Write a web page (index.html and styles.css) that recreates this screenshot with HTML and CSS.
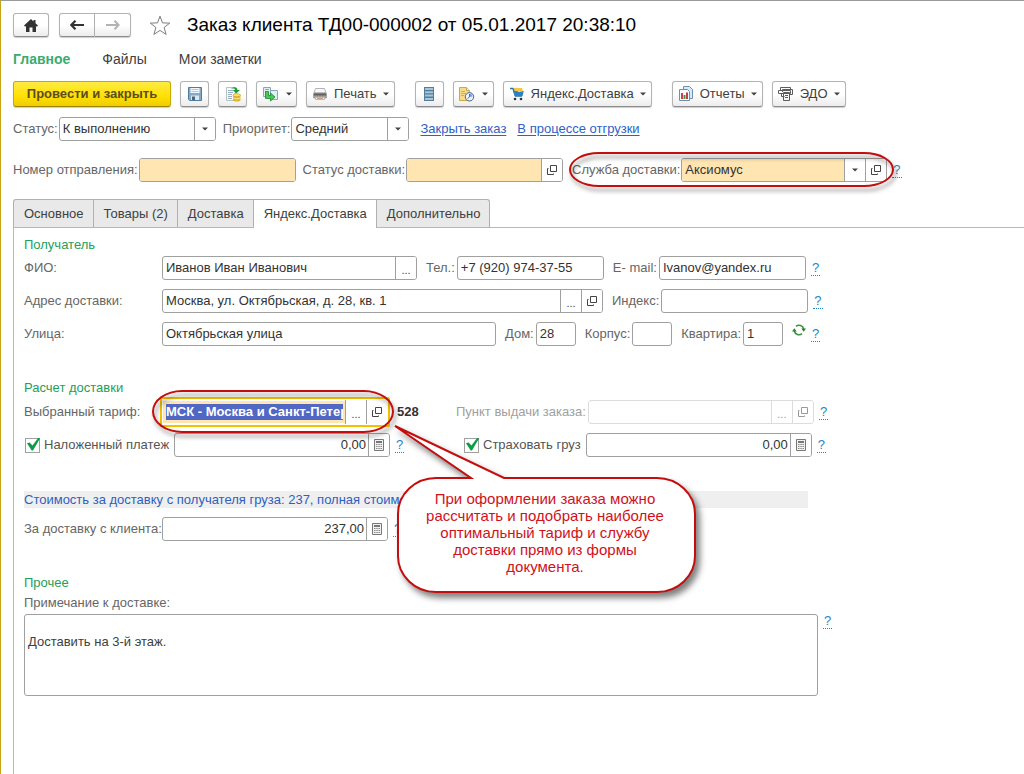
FILE: index.html
```html
<!DOCTYPE html>
<html lang="ru">
<head>
<meta charset="utf-8">
<meta name="viewport" content="width=device-width, initial-scale=1">
<title>Заказ клиента ТД00-000002</title>
<link rel="stylesheet" href="styles.css">
</head>
<body>
<svg class="sprite" aria-hidden="true">
  <symbol id="open" viewBox="0 0 12 12"><path d="M4.500 1.500h6v6h-6zM2.500 4.500h-1v6h6v-1" fill="none" stroke="currentColor"/></symbol>
  <symbol id="caret" viewBox="0 0 6 4"><path d="M0 .5h6L3 3.500z" fill="currentColor"/></symbol>
  <symbol id="calc" viewBox="0 0 12 12"><path d="M1.500.5h9v11h-9z" fill="#f2f2f2" stroke="#777"/><path d="M3 2h6v2H3z" fill="#777"/><path d="M3 5.500h1.500M5.300 5.500h1.500M7.500 5.500H9M3 7.500h1.500M5.300 7.500h1.500M7.500 7.500H9M3 9.500h1.500M5.300 9.500h1.500M7.500 9.500H9" stroke="#888"/></symbol>
</svg>

<div class="window">
  <header class="header">
    <button class="btn btn-home" aria-label="Домой"><svg width="14" height="13" viewBox="0 0 14 13"><path d="M7 0 0 6.500 1.200 7.700 2 7v6h3.500V8.500h3V13H12V7l.8.7L14 6.500 11.500 4.200V1h-2v1.400z" fill="#333"/></svg></button>
    <div class="history">
      <button class="btn" aria-label="Назад"><svg width="14" height="10" viewBox="0 0 14 10"><path d="M5.500.7 1.300 5l4.200 4.300M1.500 5H14" fill="none" stroke="#333" stroke-width="2.200"/></svg></button>
      <button class="btn" aria-label="Вперед"><svg width="14" height="10" viewBox="0 0 14 10"><path d="M8.500.7 12.700 5 8.500 9.300M12.500 5H0" fill="none" stroke="#b3b3b3" stroke-width="2"/></svg></button>
    </div>
    <svg class="star" width="22" height="21" viewBox="0 0 22 21"><path d="m11 1.200 2.500 6.700 7.200.2-5.600 4.400 2 6.900L11 15.400l-6.100 4 2-6.900L1.300 8.100l7.200-.2z" fill="#fff" stroke="#7d7d7d"/></svg>
    <h1 class="title">Заказ клиента ТД00-000002 от 05.01.2017 20:38:10</h1>
  </header>

  <nav class="nav">
    <a class="nav-link nav-active" href="#main">Главное</a>
    <a class="nav-link" href="#files">Файлы</a>
    <a class="nav-link" href="#notes">Мои заметки</a>
  </nav>

  <div class="toolbar">
    <button class="btn btn-primary">Провести и закрыть</button>
    <button class="btn btn-icon" aria-label="Записать"><svg width="16" height="16" viewBox="0 0 16 16"><path d="M1.500 1.500h13v13h-12l-1-1z" fill="#85a9c5" stroke="#537b9b"/><path d="M3.500 2h9v5h-9z" fill="#f4f8fb"/><path d="M4.500 3.500h7M4.500 5.500h7" stroke="#b8c7d3"/><path d="M4 9.500h8V14H4z" fill="#dce7ef"/><path d="M5 10.500h3V14H5z" fill="#46657e"/></svg></button>
    <button class="btn btn-icon" aria-label="Провести"><svg width="16" height="16" viewBox="0 0 16 16"><path d="M1.500 1.500h9v13h-9z" fill="#f6f9fb" stroke="#b4c2cc"/><path d="M3 4.500h5M3 6.500h5M3 8.500h4M3 10.500h4M3 12.500h4" stroke="#9bb0bf"/><path d="M6 2.800C9 .2 12.500 1 12.500 4H15l-3.800 3.500L7.800 4h2.400C10 2.400 8 2.200 6 2.800z" fill="#24983d"/><path d="M8 9v5c0 2 7.500 2 7.500 0V9z" fill="#e6b629"/><path d="M8 11.500c0 1.600 7.500 1.600 7.500 0" fill="none" stroke="#fff0a0"/><ellipse cx="11.750" cy="9.200" rx="3.750" ry="1.600" fill="#ffdf68" stroke="#cb9719" stroke-width=".6"/></svg></button>
    <button class="btn btn-icon btn-drop" aria-label="Создать на основании"><svg width="17" height="16" viewBox="0 0 17 16"><path d="M1.500 1.500h7v9h-7z" fill="#e3edf4" stroke="#89a7bb"/><path d="M3 3.500h4M3 5.500h2" stroke="#8ea6b7"/><path d="M8.500 4.500h7v9h-7z" fill="#e3edf4" stroke="#89a7bb"/><path d="M3.500 5.500h3v4h2V7l4.500 4-4.500 4v-2.500h-5z" fill="#49c952" stroke="#178c31" stroke-width=".8"/></svg><svg class="caret"><use href="#caret"/></svg></button>
    <button class="btn btn-text btn-drop"><svg width="16" height="16" viewBox="0 0 16 16"><path d="M3.500 2.500h9L14 7H2z" fill="#f5f7fa" stroke="#b0b5ba"/><path d="M2.500 6.500h11l1.500 1v4l-1 1H2l-1-1v-4z" fill="#a3a3a3"/><path d="M2 7.500h12v2H2z" fill="#5f5f5f"/><path d="M3.500 11.500h9v2h-9z" fill="#fff" stroke="#b7b7b7"/><path d="M5 12.500h6" stroke="#dc9f7d"/></svg>Печать<svg class="caret"><use href="#caret"/></svg></button>
    <button class="btn btn-icon gap-before" aria-label="Список"><svg width="14" height="16" viewBox="0 0 14 16"><path d="M2 1h10v14H2z" fill="#547d9a"/><path d="M3 3h8M3 6.300h8M3 9.600h8M3 12.900h8" stroke="#a7c5d9" stroke-width="2"/></svg></button>
    <button class="btn btn-icon btn-drop" aria-label="Отложенные"><svg width="17" height="16" viewBox="0 0 17 16"><path d="M1.500 1.500h7l3 3v10h-10z" fill="#f6dc8a" stroke="#cda74a"/><path d="M8.500 1.500v3h3" fill="#fff2bf" stroke="#cda74a"/><path d="M3 5.500h4M3 7.500h5M3 9.500h3" stroke="#d1ad54"/><circle cx="11.500" cy="10.800" r="4.200" fill="#eaf3ff" stroke="#3e6498"/><path d="M11.500 7.500v3.300h3A3.300 3.300 0 0 0 11.500 7.500" fill="#7da4e0"/><path d="M11.500 8v3l-2 1.500" fill="none" stroke="#c84438"/></svg><svg class="caret"><use href="#caret"/></svg></button>
    <button class="btn btn-text btn-drop"><svg width="16" height="16" viewBox="0 0 16 16"><path d="M5 2h8l1 3.500H5z" fill="#f4c645"/><path d="M1 2.500h3L6.500 10H13" fill="none" stroke="#2575b8" stroke-width="1.400"/><path d="M4 5h4l2 1 4.800-1-1.300 5H5.700z" fill="#2e80c6"/><circle cx="6" cy="13" r="1.300" fill="#333"/><circle cx="12" cy="13" r="1.300" fill="#333"/></svg>Яндекс.Доставка<svg class="caret"><use href="#caret"/></svg></button>
    <button class="btn btn-text btn-drop gap-before"><svg width="16" height="16" viewBox="0 0 16 16"><path d="M5.500.5h6l3 3v9h-9z" fill="#dce9f3" stroke="#6c91ae"/><path d="M1.500 3.500h8l2 2v9h-10z" fill="#f7fbfd" stroke="#6c91ae"/><path d="M3 7h2v6H3z" fill="#cc4141"/><path d="M5.500 9h2v4h-2z" fill="#3d9d57"/><path d="M8 6.500h2V13H8z" fill="#c63e3e"/></svg>Отчеты<svg class="caret"><use href="#caret"/></svg></button>
    <button class="btn btn-text btn-drop"><svg width="16" height="16" viewBox="0 0 16 16"><path d="M2.500 4V1.500h10V4M.5 4.500h12v3H.5zM4.500 6v-2.500h10v5h-3M3.500 7.500v3h3M5.500 6.500h6v8h-6zM7 9.500h3M7 11.500h3" fill="none" stroke="#5c5c5c"/></svg>ЭДО<svg class="caret"><use href="#caret"/></svg></button>
  </div>

  <div class="row row-top row-status">
    <label class="label" for="status">Статус:</label>
    <div class="field w-status"><select id="status"><option>К выполнению</option></select><span class="seg"><svg class="caret"><use href="#caret"/></svg></span></div>
    <label class="label next" for="priority">Приоритет:</label>
    <div class="field w-priority"><select id="priority"><option>Средний</option></select><span class="seg"><svg class="caret"><use href="#caret"/></svg></span></div>
    <a class="link" href="#close">Закрыть заказ</a>
    <a class="link" href="#process">В процессе отгрузки</a>
  </div>

  <div class="row row-top row-shipment">
    <label class="label" for="number">Номер отправления:</label>
    <div class="field w-number"><input class="tinted" id="number" type="text"></div>
    <label class="label next" for="dstatus">Статус доставки:</label>
    <div class="field w-number"><input class="tinted" id="dstatus" type="text"><button class="seg" aria-label="Открыть"><svg class="open"><use href="#open"/></svg></button></div>
    <div class="marked marked-service">
      <label class="label" for="service">Служба доставки:</label>
      <div class="field w-service"><select class="tinted" id="service"><option>Аксиомус</option></select><span class="seg"><svg class="caret"><use href="#caret"/></svg></span><button class="seg" aria-label="Открыть"><svg class="open"><use href="#open"/></svg></button></div>
    </div>
    <a class="help" href="#help">?</a>
  </div>

  <div class="tabs" role="tablist">
    <button class="tab" role="tab">Основное</button>
    <button class="tab" role="tab">Товары (2)</button>
    <button class="tab" role="tab">Доставка</button>
    <button class="tab tab-active" role="tab" aria-selected="true">Яндекс.Доставка</button>
    <button class="tab" role="tab">Дополнительно</button>
  </div>

  <main class="panel">
    <section class="group">
      <h2 class="heading">Получатель</h2>
      <div class="row">
        <label class="label label-col" for="fio">ФИО:</label>
        <div class="field w-fio"><input id="fio" type="text" value="Иванов Иван Иванович"><button class="seg seg-dots" aria-label="Выбрать">...</button></div>
        <label class="label next" for="tel">Тел.:</label>
        <div class="field w-contact"><input id="tel" type="text" value="+7 (920) 974-37-55"></div>
        <label class="label next" for="email">E- mail:</label>
        <div class="field w-contact"><input id="email" type="text" value="Ivanov@yandex.ru"></div>
        <a class="help" href="#help">?</a>
      </div>
      <div class="row">
        <label class="label label-col" for="address">Адрес доставки:</label>
        <div class="field w-address"><input id="address" type="text" value="Москва, ул. Октябрьская, д. 28, кв. 1"><button class="seg seg-dots" aria-label="Выбрать">...</button><button class="seg" aria-label="Открыть"><svg class="open"><use href="#open"/></svg></button></div>
        <label class="label next" for="zip">Индекс:</label>
        <div class="field w-contact"><input id="zip" type="text"></div>
        <a class="help" href="#help">?</a>
      </div>
      <div class="row">
        <label class="label label-col" for="street">Улица:</label>
        <div class="field w-street"><input id="street" type="text" value="Октябрьская улица"></div>
        <label class="label next" for="house">Дом:</label>
        <div class="field w-short"><input id="house" type="text" value="28"></div>
        <label class="label next" for="building">Корпус:</label>
        <div class="field w-short"><input id="building" type="text"></div>
        <label class="label next" for="flat">Квартира:</label>
        <div class="field w-short"><input id="flat" type="text" value="1"></div>
        <button class="refresh" aria-label="Обновить"><svg width="14" height="14" viewBox="0 0 14 14"><path d="M4 3.300A4.800 4.800 0 0 1 11.700 6M10 10.700A4.800 4.800 0 0 1 2.300 8" fill="none" stroke="#3f9140" stroke-width="1.600"/><path d="M9.300 5.500H14l-2.300 3.300zM0 8.500h4.700L2.300 5.200z" fill="#2f7f32"/></svg></button>
        <a class="help" href="#help">?</a>
      </div>
    </section>

    <section class="group group-calc">
      <h2 class="heading">Расчет доставки</h2>
      <div class="row row-tariff">
        <div class="half">
          <label class="label label-col" for="tariff">Выбранный тариф:</label>
          <div class="marked marked-tariff">
            <div class="field field-focus"><input id="tariff" type="text" value="МСК - Москва и Санкт-Петербург"><button class="seg seg-dots" aria-label="Выбрать">...</button><button class="seg" aria-label="Открыть"><svg class="open"><use href="#open"/></svg></button></div>
            <aside class="callout">
              <svg class="callout-shape" width="316" height="180" viewBox="0 0 316 180"><path d="M6 6 115 58H268a38 36 0 0 1 38 36V136a38 36 0 0 1-38 36H47a38 36 0 0 1-38-36V94a38 36 0 0 1 38-36H82z" fill="#fff" stroke="#c40d0d" stroke-width="2"/></svg>
              <p class="callout-text">При оформлении заказа можно<br>рассчитать и подобрать наиболее<br>оптимальный тариф и службу<br>доставки прямо из формы<br>документа.</p>
            </aside>
          </div>
          <strong class="amount">528</strong>
        </div>
        <label class="label label-off" for="pickup">Пункт выдачи заказа:</label>
        <div class="field field-off w-right"><input id="pickup" type="text" disabled><button class="seg seg-dots" disabled aria-label="Выбрать">...</button><button class="seg" disabled aria-label="Открыть"><svg class="open"><use href="#open"/></svg></button></div>
        <a class="help" href="#help">?</a>
      </div>
      <div class="row row-checks">
        <div class="half">
          <label class="check"><input type="checkbox" checked>Наложенный платеж</label>
          <div class="field w-cod"><input class="num" type="text" value="0,00" aria-label="Наложенный платеж"><button class="seg" aria-label="Калькулятор"><svg class="calc"><use href="#calc"/></svg></button></div>
          <a class="help" href="#help">?</a>
        </div>
        <label class="check check-second"><input type="checkbox" checked>Страховать груз</label>
        <div class="field w-right"><input class="num" type="text" value="0,00" aria-label="Страховать груз"><button class="seg" aria-label="Калькулятор"><svg class="calc"><use href="#calc"/></svg></button></div>
        <a class="help" href="#help">?</a>
      </div>
      <p class="cost">Стоимость за доставку с получателя груза: 237, полная стоимо</p>
      <div class="row">
        <label class="label label-col" for="fee">За доставку с клиента:</label>
        <div class="field w-right"><input class="num" id="fee" type="text" value="237,00"><button class="seg" aria-label="Калькулятор"><svg class="calc"><use href="#calc"/></svg></button></div>
        <a class="help" href="#help">?</a>
      </div>
    </section>

    <section class="group group-other">
      <h2 class="heading">Прочее</h2>
      <label class="label label-note" for="note">Примечание к доставке:</label>
      <div class="note-row">
        <textarea class="note" id="note">
Доставить на 3-й этаж.</textarea>
        <a class="help" href="#help">?</a>
      </div>
    </section>
  </main>
</div>
</body>
</html>
```
FILE: styles.css
```css
* { box-sizing: border-box; }

body {
  margin: 0;
  background: #fff;
  color: #404040;
  font: 13px/16px "Liberation Sans", Arial, sans-serif;
}

button, input, select, textarea { font: inherit; color: inherit; }
a { color: inherit; text-decoration: none; }
h1, h2, p { margin: 0; font-weight: normal; }
svg { flex: none; }

.sprite { display: none; }
.caret { width: 6px; height: 4px; }
.open, .calc { width: 12px; height: 12px; }

.window {
  display: flex;
  flex-direction: column;
  min-height: 100vh;
  padding: 11px 0 0 12px;
  border-top: 1px solid #999;
  border-left: 1px solid #c8a415;
}

/* Header */
.header { display: flex; align-items: center; height: 26px; }

.btn {
  display: flex;
  align-items: center;
  justify-content: center;
  padding: 0;
  border: 1px solid #b3b3b3;
  border-bottom-color: #8c8c8c;
  border-radius: 3px;
  background: linear-gradient(#fff, #fff 50%, #ececec);
  box-shadow: 0 1px 1px rgba(0, 0, 0, .2);
}

.btn-home { width: 36px; height: 24px; margin-right: 10px; }
.history { display: flex; }
.history .btn { width: 36px; height: 24px; }
.history .btn:first-child { border-radius: 3px 0 0 3px; }
.history .btn:last-child { border-left: 0; border-radius: 0 3px 3px 0; }
.star { margin: 0 16px 0 18px; }
.title { color: #000; font-size: 19px; line-height: 26px; }

.nav { display: flex; gap: 32px; margin-top: 12px; font-size: 14px; line-height: 18px; }
.nav-active { color: #3bab6b; font-weight: bold; }

/* Toolbar */
.toolbar { display: flex; gap: 9px; margin-top: 13px; }
.toolbar .btn { height: 26px; white-space: nowrap; }
.toolbar .btn-primary {
  width: 158px;
  border-color: #c9a900;
  border-bottom-color: #9d8500;
  background: linear-gradient(#ffeb45, #ffe000 60%, #f0cc00);
  color: #5b4d1e;
  font-weight: bold;
}
.btn-icon { width: 29px; }
.btn-icon.btn-drop { width: 41px; gap: 7px; }
.toolbar .btn-text { gap: 6px; padding: 0 5px; }
.gap-before { margin-left: 11px; }

/* Form rows */
.row { display: flex; align-items: center; min-height: 24px; }
.row-status { margin-top: 10px; }
.row-shipment { margin-top: 17px; }

.label { flex: none; margin-right: 2px; color: #666; white-space: nowrap; }
.label-col { width: 136px; }
.next { margin-left: 9px; }
.row-top .label { margin-right: 1px; }
.row-top .next { margin-left: 7px; }
.link {
  margin-left: 11px;
  color: #2e62c4;
  text-decoration: underline;
  text-underline-offset: 2px;
  white-space: nowrap;
}

.help {
  flex: none;
  margin-left: 5px;
  padding: 0 1px;
  border-bottom: 1px dotted #2486c7;
  color: #2486c7;
  line-height: 14px;
}

.field {
  display: flex;
  height: 24px;
  border: 1px solid #a0a0a0;
  border-radius: 3px;
  background: #fff;
  color: #333;
  overflow: hidden;
}
.field input, .field select {
  flex: 1;
  min-width: 0;
  width: 0;
  padding: 0 3px;
  border: 0;
  outline: 0;
  appearance: none;
  background: transparent;
}
.field .tinted { background: #ffe5b2; }
.field .num { padding-right: 2px; text-align: right; }

.seg {
  display: flex;
  flex: none;
  align-items: center;
  justify-content: center;
  width: 21px;
  padding: 0;
  border: 0;
  border-left: 1px solid #a0a0a0;
  background: #fff;
  color: #444;
}
.seg-dots { padding-top: 4px; font-size: 11px; }

.w-status { width: 157px; }
.w-priority { width: 118px; }
.w-number { width: 157px; }
.w-service { width: 206px; }
.w-fio { width: 255px; }
.w-contact { width: 147px; }
.w-address { width: 441px; }
.w-street { width: 334px; }
.w-short { width: 40px; }
.w-cod { width: 216px; }
.w-right { width: 226px; }

.field-off { border-color: #dcdcdc; }
.field-off .seg { border-color: #dcdcdc; color: #999; }
.label-off { color: #a0a0a0; }

.field-focus {
  width: 230px;
  height: 30px;
  padding: 1px;
  border: 2px solid #f2c200;
  border-radius: 2px;
}
.field-focus input {
  margin: 1px 0;
  padding: 0;
  border: 3px solid #ffe5b2;
  border-right-width: 2px;
  background: #5068c4;
  color: #fff;
  font-weight: bold;
}

.refresh { height: 22px; margin-left: 9px; padding: 0 0 8px; border: 0; background: none; }

/* Red outlines around the fields being explained */
.marked { position: relative; display: flex; align-items: center; }
.marked::after {
  content: "";
  position: absolute;
  border: 2px solid #c40d0d;
  border-radius: 30px / 50%;
  filter: drop-shadow(2px 4px 2px rgba(0, 0, 0, .45));
  pointer-events: none;
}
.marked-service { margin-left: 9px; }
.marked-service::after { inset: -6px -7px -5px -3px; }
.marked-tariff { margin-left: -2px; z-index: 1; }
.marked-tariff::after { inset: -7px -4px -6px -8px; }

.callout { position: absolute; top: 23px; left: 229px; }
.callout-shape { display: block; filter: drop-shadow(4px 5px 3px rgba(0, 0, 0, .5)); }
.callout-text {
  position: absolute;
  inset: 70px 14px auto 10px;
  color: #d0121b;
  font-size: 15px;
  line-height: 17px;
  text-align: center;
  white-space: nowrap;
}

/* Tabs */
.tabs { display: flex; margin-top: 17px; border-bottom: 1px solid #b8b8b8; }
.tab {
  height: 28px;
  padding: 0 9px 0 10px;
  border: 1px solid #b0b0b0;
  border-bottom: 0;
  border-left-width: 0;
  background: #e9e9e9;
  color: #404040;
}
.tab:first-child { border-left-width: 1px; border-radius: 3px 0 0; }
.tab:last-child { border-radius: 0 3px 0 0; }
.tab-active { margin-bottom: -1px; height: 29px; background: #fff; }

.panel { flex: 1; padding: 8px 10px 20px; border-left: 1px solid #b8b8b8; }
.heading { color: #22a05c; font-size: 13px; line-height: 18px; }
.group .row + .row { margin-top: 9px; }
.heading + .row { margin-top: 2px; }
.group-calc { margin-top: 33px; }
.heading + .row-tariff { margin-top: 0; }
.half { display: flex; flex: 0 1 432px; align-items: center; min-width: 0; }
.group .row-tariff + .row-checks { margin-top: 6px; }
.amount { margin-left: 7px; color: #333; }

.check { display: flex; flex: none; align-items: center; gap: 4px; margin-right: 5px; white-space: nowrap; color: #555; }
.check-second { padding-left: 7px; }
.check input {
  position: relative;
  width: 15px;
  height: 15px;
  margin: 0 0 0 1px;
  border: 1px solid #a0a0a0;
  appearance: none;
}
.check input:checked::before {
  content: "";
  position: absolute;
  inset: -1px -1px 1px 1px;
  background: #0d9c48;
  clip-path: polygon(0 45%, 20% 38%, 42% 62%, 88% 0, 100% 8%, 46% 100%, 36% 100%);
}

.cost {
  max-width: 784px;
  margin: 34px 0 9px;
  background: #efefef;
  color: #2e5fbe;
  line-height: 17px;
}

.group-other { margin-top: 33px; }
.label-note { display: block; margin-top: 3px; }
.note-row { display: flex; align-items: flex-start; margin-top: 3px; }
.note {
  flex: 0 1 794px;
  height: 82px;
  padding: 19px 3px;
  border: 1px solid #a0a0a0;
  border-radius: 3px;
  resize: none;
}
```
